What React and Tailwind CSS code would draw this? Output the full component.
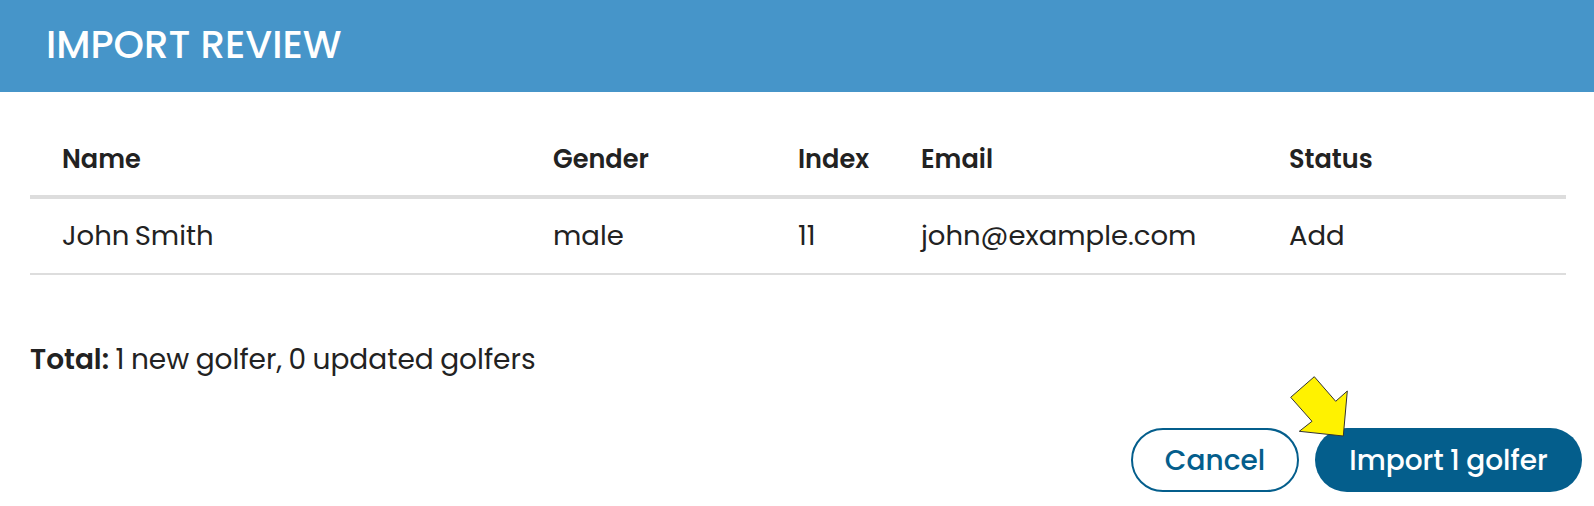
export default function App() {
  const cols = "grid grid-cols-[491px_245px_123px_368px_1fr]";
  return (
    <div className="w-[1594px] h-[506px] bg-white overflow-hidden font-['Poppins','Inter','Liberation_Sans',sans-serif] text-[#222222]">
      <div className="h-[92px] bg-[#4695c9] flex items-center px-[46px] pb-[2px]">
        <h1 className="text-[38.8px] font-medium text-white">IMPORT REVIEW</h1>
      </div>
      <div className="pl-[30px] pr-[28px]">
        <div className={cols + " h-[107px] pl-[32px] items-center pt-[32px] text-[25.6px] leading-none font-semibold border-b-[4px] border-[#dddddd]"}>
          <div>Name</div>
          <div>Gender</div>
          <div>Index</div>
          <div>Email</div>
          <div>Status</div>
        </div>
        <div className={cols + " h-[76px] items-center pl-[32px] text-[27.5px] leading-none border-b-[2px] border-[#dddddd]"}>
          <div className="[word-spacing:-2px]">John Smith</div>
          <div>male</div>
          <div>11</div>
          <div>john@example.com</div>
          <div>Add</div>
        </div>
        <p className="mt-[65px] text-[28px] leading-[40px] [word-spacing:-1px]"><b className="font-semibold">Total:</b> 1 new golfer, 0 updated golfers</p>
      </div>
      <div className="flex justify-end gap-[16px] pr-[12px] mt-[48px]">
        <div className="relative">
          <button className="w-[168px] h-[64px] pt-[2px] rounded-full border-2 border-[#045e8c] bg-white text-[#045e8c] text-[28px] font-medium">Cancel</button>
        </div>
        <div className="relative">
          <button className="w-[267px] h-[64px] pt-[2px] rounded-full bg-[#045e8c] text-white text-[28px] font-medium [word-spacing:-1px]">Import 1 golfer</button>
          <svg className="absolute left-[-27px] top-[-54px]" width="62" height="65" viewBox="0 0 62 65">
            <polygon points="26.3,2.7 47.7,27.3 59.3,17 55.3,62 11.3,57.3 24,47.3 2.7,23.3" fill="#fff200" stroke="#333333" strokeWidth="1" />
          </svg>
        </div>
      </div>
    </div>
  );
}
